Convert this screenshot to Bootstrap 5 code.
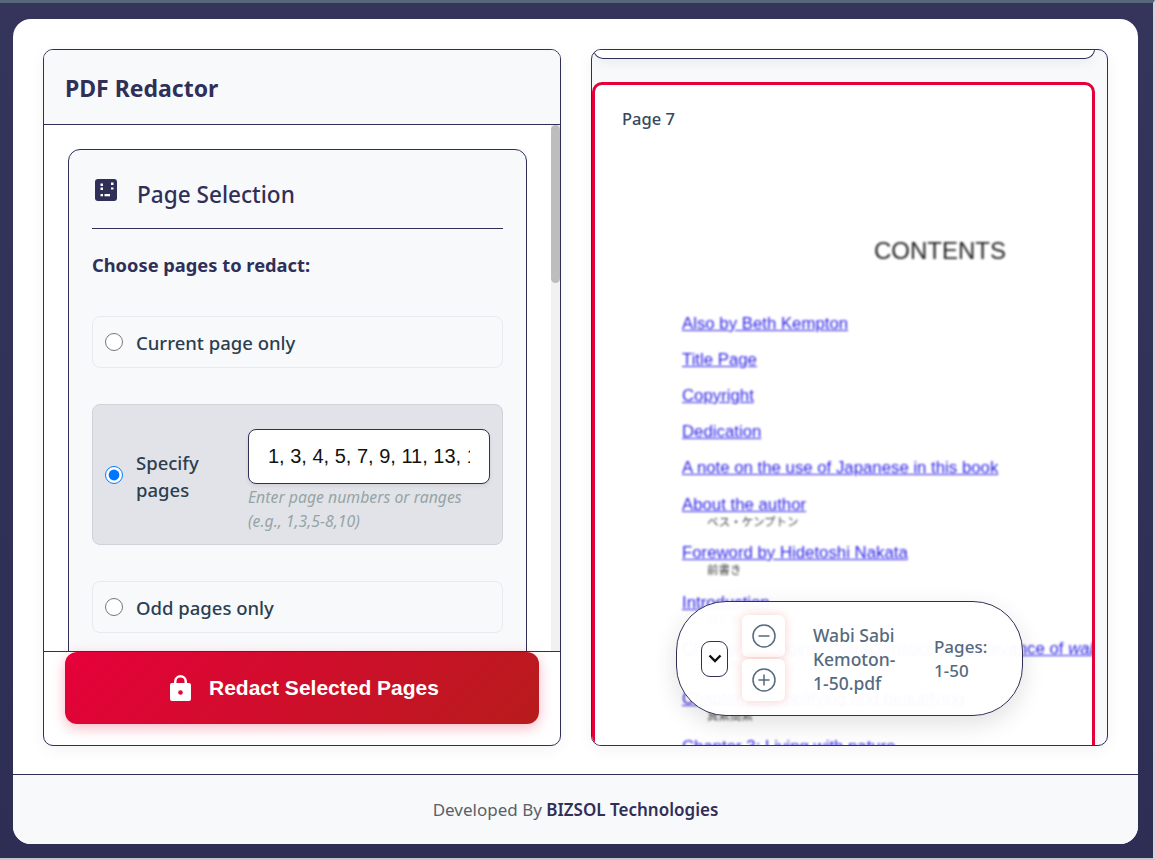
<!DOCTYPE html>
<html lang="en">
<head>
  <meta charset="UTF-8">
  <meta name="viewport" content="width=device-width, initial-scale=1.0">
  <title>PDF Redactor</title>
  <link href="https://cdn.jsdelivr.net/npm/bootstrap@5.3.0/dist/css/bootstrap.min.css" rel="stylesheet">
  <style>
    html, body { height: 100%; overflow: hidden; }
    body {
      font-family: "Noto Sans", "Open Sans", sans-serif;
      background: linear-gradient(#35355c, #2e2d54);
      border-top: 3px solid #56687a;
      border-right: 2px solid #d4d5d9;
      border-bottom: 2px solid #c4c5c9;
      padding: 16px 15px 14px 13px;
      color: #2f2f57;
    }
    .app-shell { height: 825px; background: #fff; border-radius: 18px; overflow: hidden; }
    .app-main { height: 755px; padding: 30px 30px 28px 30px; gap: 30px; }
    .side-panel { width: 518px; height: 697px; border: 1px solid #2f2f57; border-radius: 10px; box-shadow: 0 4px 16px rgba(0,0,0,.05); overflow: hidden; background: #fff; }
    .panel-head { height: 75px; background: #f8f9fb; border-bottom: 1px solid #2f2f57; padding: 4px 21px 0; }
    .panel-head h1 { font-size: 23px; font-weight: 700; margin: 0; color: #2f2f57; }
    .panel-mid { height: 526px; }
    .panel-scroll { width: 507px; flex: none; overflow: hidden; padding: 24px 24px 0; }
    .fake-track { width: 9px; flex: none; background: #f1f1f1; }
    .fake-thumb { height: 158px; background: #bdbdbd; border-radius: 5px; }
    .select-box { height: 1700px; background: #f8f9fb; border: 1px solid #2f2f57; border-radius: 12px; padding: 24px 23px; }
    .select-title { height: 55px; border-bottom: 1px solid #2f2f57; gap: 20px; padding-left: 3px; margin-bottom: 23px; }
    .select-title svg { margin-top: 5px; }
    .select-title h2 { font-size: 22.6px; font-weight: 500; line-height: 34px; margin: 4px 0 0; color: #2f2f57; }
    .choose-text { font-size: 18.3px; font-weight: 700; margin-bottom: 38px; line-height: 26px; color: #2f2f57; }
    .pick-row { background: #f8f9fb; border: 1px solid #e8eaef; border-radius: 8px; min-height: 52px; padding: 0 12px; margin-bottom: 36px; gap: 13px; color: #2c3e50; font-size: 18.5px; font-weight: 500; }
    .pick-row input[type=radio] { width: 18px; height: 18px; margin: 0; flex: none; }
    .pick-row > span { padding-top: 2px; }
    .pick-row.picked { background: #e2e3e8; border-color: #d0d2da; height: 141px; padding-right: 12px; }
    .pick-row.picked .pick-label { width: 99px; line-height: 27px; padding-top: 2px; }
    .pages-wrap { padding-top: 12px; }
    .pages-input { width: 242px; height: 55px; border: 1px solid #2f2f57; border-radius: 8px; font-family: "Liberation Sans", sans-serif; font-size: 20px; padding: 0 19px; color: #111; box-shadow: 0 2px 4px rgba(0,0,0,.08); }
    .pages-help { font-size: 15.8px; font-weight: 400; font-style: italic; color: #95a5a6; line-height: 24px; margin-top: 1px; }
    .panel-foot { height: 94px; border-top: 1px solid #2f2f57; padding: 0 21px; }
    .redact-btn { width: 474px; height: 72px; border: 0; border-radius: 12px; padding: 0 0 0 5px; color: #fff; font-family: "Liberation Sans", sans-serif; font-size: 21px; font-weight: 700; gap: 18px; background: linear-gradient(135deg, #e6003a, #b71c1c); box-shadow: 0 4px 14px rgba(230,0,58,.28); }
    .redact-btn:hover { color: #fff; }
    .view-panel { width: 517px; height: 697px; position: relative; background: #f8f9fb; }
    .prev-sheet { height: 10px; margin: -1px 12px 23px 1px; background: #fff; border: 1px solid #2f2f57; border-top-color: transparent; border-radius: 0 0 12px 12px; box-shadow: 0 4px 12px rgba(0,0,0,.06); }
    .page-sheet { height: 900px; margin: 0 12px 0 0; background: #fff; border: 3px solid #e6003a; border-radius: 10px; overflow: hidden; padding: 14px 27px; white-space: nowrap; }
    .page-tag { font-size: 16.5px; font-weight: 500; color: #34495e; line-height: 20px; margin: 10px 0 0; }
    .pdf-text { font-family: "Liberation Sans", sans-serif; filter: blur(.8px); padding-left: 60px; margin-top: 108px; }
    .pdf-text h3 { font-size: 24px; font-weight: 400; color: #222; margin: 0 0 49px 192px; line-height: 28px; }
    .toc-row { height: 36px; line-height: 20px; font-size: 16.8px; }
    .toc-row a { color: #2a1fe6; }
    .toc-sub { display: block; font-family: "Noto Sans CJK JP", sans-serif; font-size: 11.5px; line-height: 13px; color: #444; margin-left: 25px; }
    .toc-37 { height: 37px; }
    .toc-46 { height: 46px; }
    .toc-48 { height: 48px; }
    .toc-50 { height: 50px; }
    .float-bar { position: absolute; z-index: 2; left: 84px; top: 551px; width: 347px; height: 115px; border: 1px solid #2f2f57; border-radius: 50px; background: rgba(255,255,255,.97); box-shadow: 0 8px 24px rgba(0,0,0,.12); padding-left: 24px; color: #556a7e; }
    .fold-btn { width: 27px; height: 36px; border: 1px solid #2f2f57; border-radius: 9px; background: #fff; padding: 0; margin-right: 14px; }
    .zoom-btn { width: 43px; height: 42px; background: #fff; border: 0; border-radius: 6px; padding: 0; box-shadow: 0 0 10px rgba(230,60,40,.24); }
    .zoom-stack { gap: 2px; margin-top: -1px; }
    .file-name { width: 92px; margin-left: 28px; font-size: 17.5px; font-weight: 500; line-height: 24px; }
    .file-pages { margin-left: 29px; font-size: 17px; font-weight: 500; line-height: 24px; width: 70px; }
    .app-foot { height: 70px; background: #f8f9fb; border-top: 1px solid #2f2f57; color: #5a6168; font-size: 17px; }
    .app-foot b { font-weight: 600; color: #2f2f57; }
  </style>
</head>
<body>
  <div class="app-shell d-flex flex-column">
    <div class="app-main d-flex">
      <div class="side-panel d-flex flex-column">
        <div class="panel-head d-flex align-items-center"><h1>PDF Redactor</h1></div>
        <div class="panel-mid d-flex">
          <div class="panel-scroll">
            <div class="select-box">
              <div class="select-title d-flex align-items-start">
                <svg width="22" height="22" viewBox="0 0 22 22"><rect width="22" height="22" rx="3" fill="#2f2f57"/><g fill="#fff"><rect x="5.500" y="4.500" width="2.500" height="2.500"/><rect x="16" y="3.500" width="2.500" height="2.500"/><rect x="5.500" y="8.500" width="2.500" height="2.500"/><rect x="16" y="8.500" width="2.500" height="2"/><rect x="5.500" y="15" width="2.500" height="2.300"/><rect x="9.500" y="15" width="5.500" height="2.300"/></g></svg>
                <h2>Page Selection</h2>
              </div>
              <div class="choose-text">Choose pages to redact:</div>
              <label class="pick-row d-flex align-items-center"><input type="radio" name="pg"><span>Current page only</span></label>
              <div class="pick-row picked d-flex align-items-center">
                <input type="radio" name="pg" checked>
                <span class="pick-label">Specify pages</span>
                <div class="pages-wrap">
                  <input class="pages-input d-block" type="text" value="1, 3, 4, 5, 7, 9, 11, 13, 15, 17">
                  <div class="pages-help">Enter page numbers or ranges<br>(e.g., 1,3,5-8,10)</div>
                </div>
              </div>
              <label class="pick-row d-flex align-items-center"><input type="radio" name="pg"><span>Odd pages only</span></label>
            </div>
          </div>
          <div class="fake-track"><div class="fake-thumb"></div></div>
        </div>
        <div class="panel-foot">
          <button class="btn redact-btn d-flex align-items-center justify-content-center" type="button">
            <svg width="21" height="26" viewBox="0 0 21 26"><path fill="#fff" d="M10.500 0A6.500 6.500 0 0 0 4 6.500V8H2a2 2 0 0 0-2 2v14a2 2 0 0 0 2 2h17a2 2 0 0 0 2-2V10a2 2 0 0 0-2-2h-2V6.500A6.500 6.500 0 0 0 10.500 0zm0 2.500a4 4 0 0 1 4 4V8h-8V6.500a4 4 0 0 1 4-4z"/><circle cx="10.500" cy="17.500" r="2.300" fill="#dc0c34"/></svg>
            <span>Redact Selected Pages</span>
          </button>
        </div>
      </div>
      <div class="side-panel view-panel">
        <div class="prev-sheet"></div>
        <div class="page-sheet">
          <div class="page-tag">Page 7</div>
          <div class="pdf-text">
            <h3>CONTENTS</h3>
            <div class="toc-row"><a href="#">Also by Beth Kempton</a></div>
            <div class="toc-row"><a href="#">Title Page</a></div>
            <div class="toc-row"><a href="#">Copyright</a></div>
            <div class="toc-row"><a href="#">Dedication</a></div>
            <div class="toc-row toc-37"><a href="#">A note on the use of Japanese in this book</a></div>
            <div class="toc-row toc-48"><a href="#">About the author</a><span class="toc-sub" lang="ja">ベス・ケンプトン</span></div>
            <div class="toc-row toc-50"><a href="#">Foreword by Hidetoshi Nakata</a><span class="toc-sub" lang="ja">前書き</span></div>
            <div class="toc-row toc-46"><a href="#">Introduction</a><span class="toc-sub" lang="ja">はじめに</span></div>
            <div class="toc-row toc-50"><a href="#">Chapter 1: Origins, characteristics and relevance of <i>wabi sabi</i></a><span class="toc-sub" lang="ja">侘び寂びとは</span></div>
            <div class="toc-row toc-48"><a href="#">Chapter 2: Simplifying and beautifying</a><span class="toc-sub" lang="ja">真素簡素</span></div>
            <div class="toc-row"><a href="#">Chapter 3: Living with nature</a></div>
          </div>
        </div>
        <div class="float-bar d-flex align-items-center">
          <button class="fold-btn d-flex align-items-center justify-content-center" type="button"><svg width="14" height="9" viewBox="0 0 14 9"><path d="M1.500 1.500 7 7l5.500-5.500" fill="none" stroke="#111" stroke-width="2.400"/></svg></button>
          <div class="zoom-stack d-flex flex-column">
            <button class="zoom-btn d-flex align-items-center justify-content-center" type="button"><svg width="24" height="24" viewBox="0 0 24 24" fill="none" stroke="#556a7e" stroke-width="1.500"><circle cx="12" cy="12" r="11"/><path d="M6.500 12h11"/></svg></button>
            <button class="zoom-btn d-flex align-items-center justify-content-center" type="button"><svg width="24" height="24" viewBox="0 0 24 24" fill="none" stroke="#556a7e" stroke-width="1.500"><circle cx="12" cy="12" r="11"/><path d="M6.500 12h11M12 6.500v11"/></svg></button>
          </div>
          <div class="file-name">Wabi Sabi Kemoton-1-50.pdf</div>
          <div class="file-pages">Pages: 1-50</div>
        </div>
      </div>
    </div>
    <div class="app-foot d-flex align-items-center justify-content-center">
      <span>Developed By <b>BIZSOL Technologies</b></span>
    </div>
  </div>
  <script src="https://cdn.jsdelivr.net/npm/bootstrap@5.3.0/dist/js/bootstrap.bundle.min.js"></script>
</body>
</html>
